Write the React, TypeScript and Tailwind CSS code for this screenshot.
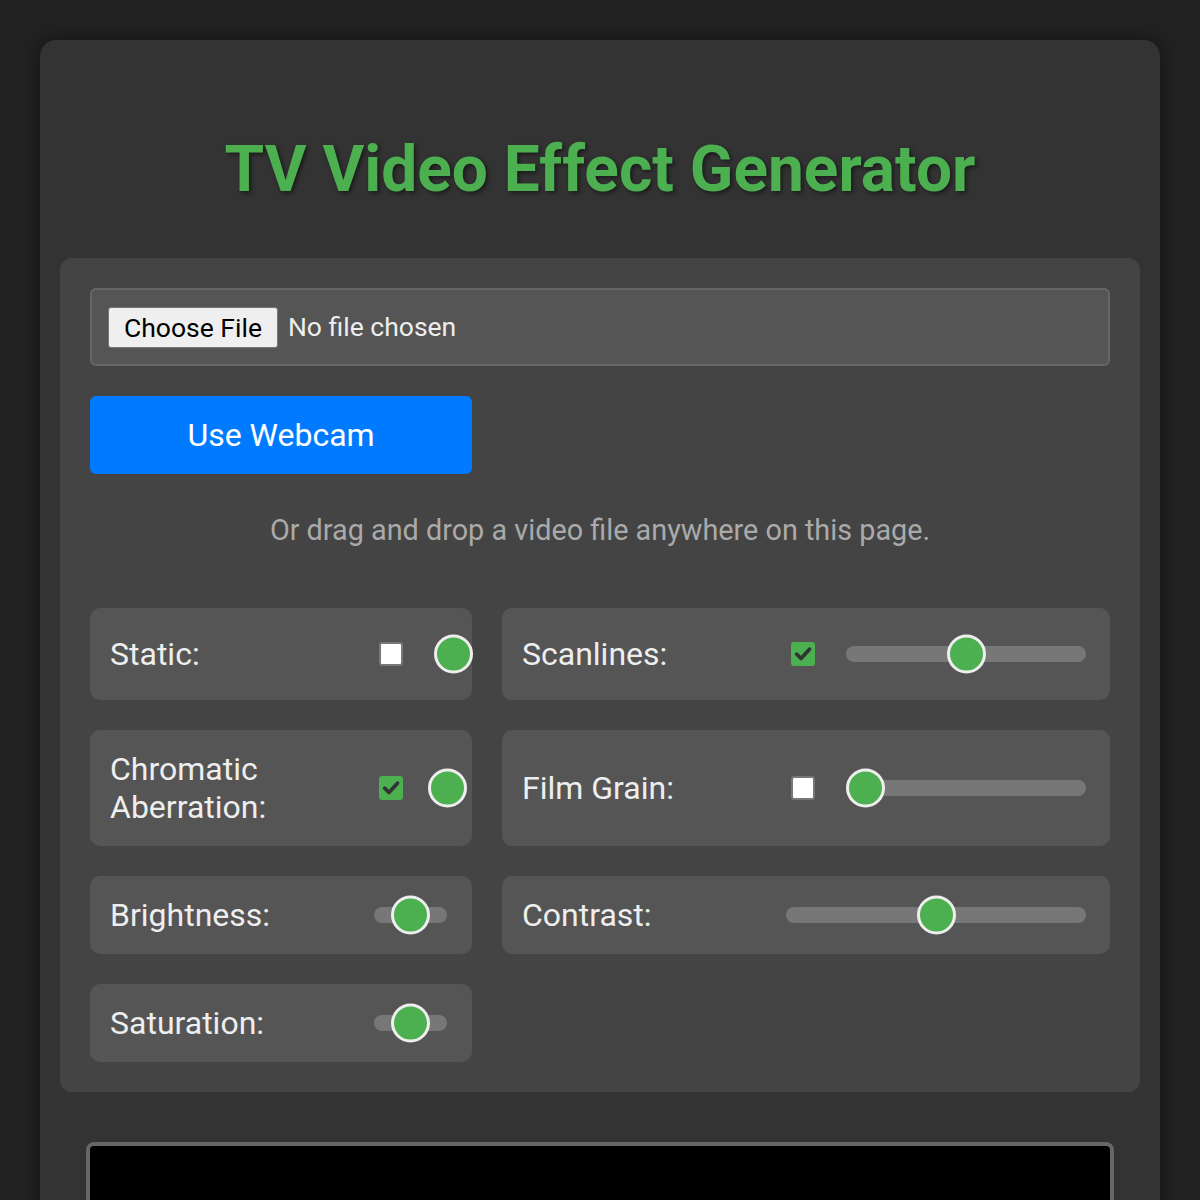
import React from "react";

type Ctl = {
  label: string;
  check?: boolean;
  track: number;
  value: number;
  gap?: string;
};

function Checkbox({ checked }: { checked: boolean }) {
  return checked ? (
    <span className="ml-[5px] my-[14px] flex h-[24px] w-[24px] shrink-0 items-center justify-center rounded-[3px] bg-[#4caf50]">
      <svg viewBox="0 0 16 16" className="h-[20px] w-[20px]">
        <path d="M3 8.2l3.4 3.4L13.2 4.2" fill="none" stroke="#333" strokeWidth="3" strokeLinecap="round" strokeLinejoin="round" />
      </svg>
    </span>
  ) : (
    <span className="ml-[5px] my-[14px] block h-[24px] w-[24px] shrink-0 rounded-[3px] border-2 border-[#777] bg-white" />
  );
}

function Slider({ width, value }: { width: number; value: number }) {
  const thumb = 39;
  const left = width > thumb ? value * (width - thumb) : 0;
  return (
    <div className="relative h-[16px] shrink-0 rounded-full bg-[#777]" style={{ width }}>
      <span
        className="absolute top-1/2 block h-[39px] w-[39px] -translate-y-1/2 rounded-full border-[3.5px] border-[#eee] bg-[#4caf50]"
        style={{ left }}
      />
    </div>
  );
}

function Control({ c }: { c: Ctl }) {
  return (
    <div className="flex items-center rounded-[10px] bg-[#555] py-[20px] pl-[20px]">
      <label className="w-[264px] shrink-0 text-[32px] leading-[38px] text-[#eee]">{c.label}</label>
      {c.check !== undefined && <Checkbox checked={c.check} />}
      <div className={c.gap ?? ""}>
        <Slider width={c.track} value={c.value} />
      </div>
    </div>
  );
}

const left: Ctl[] = [
  { label: "Static:", check: false, track: 0, value: 0.5, gap: "ml-[31px]" },
  { label: "Chromatic Aberration:", check: true, track: 0, value: 0.5, gap: "ml-[25px]" },
  { label: "Brightness:", track: 73, value: 0.5 },
  { label: "Saturation:", track: 73, value: 0.5 },
];

const right: Ctl[] = [
  { label: "Scanlines:", check: true, track: 240, value: 0.5, gap: "ml-[31px]" },
  { label: "Film Grain:", check: false, track: 240, value: 0, gap: "ml-[31px]" },
  { label: "Contrast:", track: 300, value: 0.5 },
];

export default function App() {
  return (
    <div className="min-h-[1200px] bg-[#222] px-[40px] pt-[40px] font-['Roboto',sans-serif]">
      <div className="rounded-[16px] bg-[#333] px-[20px] pt-[20px] pb-[60px] shadow-[0_0_20px_rgba(0,0,0,0.5)]">
        <h1 className="mt-[71px] mb-[50px] text-center text-[64px] font-bold leading-[77px] text-[#4caf50] [text-shadow:2px_2px_4px_rgba(0,0,0,0.5)]">
          TV Video Effect Generator
        </h1>

        <div className="rounded-[12px] bg-[#444] p-[30px]">
          <div className="flex h-[78px] items-center rounded-[6px] border-2 border-[#666] bg-[#555] px-[16px]">
            <span className="rounded-[3px] border border-[#767676] bg-[#efefef] px-[15px] text-[26.5px] leading-[39px] text-black">
              Choose File
            </span>
            <span className="ml-[10px] text-[26.5px] text-[#eee]">No file chosen</span>
          </div>

          <button className="mt-[30px] h-[78px] w-[382px] rounded-[6px] bg-[#007bff] text-[32px] text-white">
            Use Webcam
          </button>

          <p className="mt-[39px] text-center text-[28.8px] leading-[34px] text-[#aaa]">
            Or drag and drop a video file anywhere on this page.
          </p>

          <div className="mt-[61px] grid grid-cols-[382px_608px] gap-[30px]">
            <Control c={left[0]} />
            <Control c={right[0]} />
            <Control c={left[1]} />
            <Control c={right[1]} />
            <Control c={left[2]} />
            <Control c={right[2]} />
            <Control c={left[3]} />
          </div>
        </div>

        <div className="mx-auto mt-[50px] h-[400px] w-[1028px] rounded-[8px] border-4 border-[#666] bg-black" />
      </div>
    </div>
  );
}
